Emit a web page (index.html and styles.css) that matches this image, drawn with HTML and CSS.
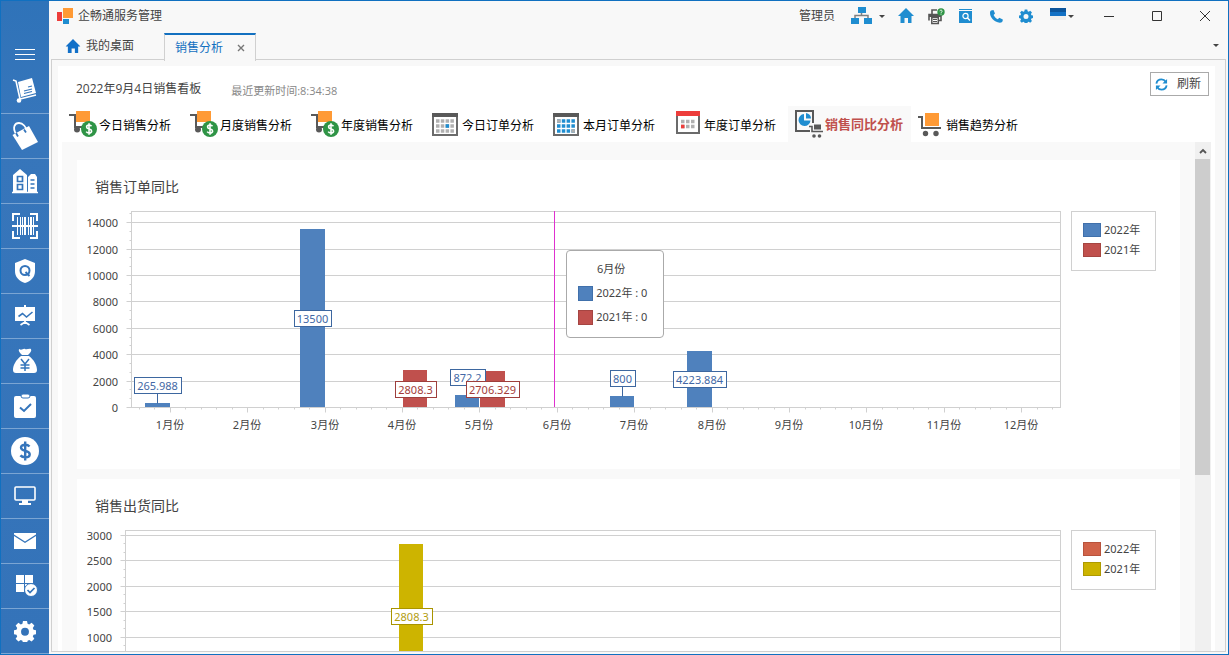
FILE: index.html
```
<!DOCTYPE html>
<html lang="zh-CN">
<head>
<meta charset="utf-8">
<title>企畅通服务管理</title>
<link rel="stylesheet" href="styles.css">
</head>
<body>
<svg class="defs" aria-hidden="true">
  <symbol id="cart-money" viewBox="0 0 28 28">
    <path d="M0 5h6v12h9" fill="none" stroke="#595959" stroke-width="2"/>
    <rect x="7" y="1" width="14" height="11" fill="#ff9a35"/>
    <circle cx="8" cy="19.500" r="3" fill="#595959"/>
    <circle cx="20" cy="19" r="8" fill="#2f9446"/>
    <path d="M22.500 16.200c-.6-.9-1.500-1.200-2.500-1.200-1.400 0-2.400.7-2.400 1.900 0 2.700 5 1.300 5 4 0 1.300-1.100 2-2.600 2-1.200 0-2.200-.4-2.800-1.300M20 13.300v11.400" fill="none" stroke="#fff" stroke-width="1.600"/>
  </symbol>
  <symbol id="gear" viewBox="0 0 24 24">
    <path fill-rule="evenodd" d="M9.800 1h4.400l.6 3 1.800.8 2.600-1.700 3 3-1.700 2.600.8 1.800 2.900.6v4.400l-2.900.6-.8 1.800 1.700 2.600-3 3-2.600-1.700-1.800.8-.6 2.900H9.800l-.6-2.900-1.800-.8-2.600 1.700-3-3 1.700-2.600-.8-1.800-2.900-.6v-4.400l2.900-.6.8-1.800L1.800 6.100l3-3 2.600 1.700L9.200 4zM12 8.500a4.300 4.300 0 1 0 0 8.600 4.300 4.300 0 0 0 0-8.600z"/>
  </symbol>
  <symbol id="home" viewBox="0 0 16 16">
    <path d="M8 0l8 8h-2.500v7H10v-5H6.500v5h-4V8H0z"/>
  </symbol>
</svg>
<div class="window">
  <nav class="sidebar" aria-label="功能模块">
    <button class="menu" aria-label="菜单"><span></span><span></span><span></span></button>
    <button class="module" aria-label="采购"><svg viewBox="0 0 28 28"><path d="M2 3l3 1 4 18 16-4" fill="none" stroke="#fff" stroke-width="1.600"/><path d="M7 5l14-4 4 15-15 4z" fill="#fff"/><circle cx="8" cy="23.500" r="2.300" fill="#fff"/><path d="M13 14l8-2M13 16.500l8-2M17 10l4-1" stroke="#3575bb" stroke-width="1.200"/></svg></button>
    <button class="module" aria-label="销售"><svg viewBox="0 0 28 28"><path d="M1.500 13L18 4l9 16-16 8z" fill="#fff"/><path d="M5 12C1 5 4 1 8 1s7 4 8 8" fill="none" stroke="#fff" stroke-width="1.800"/><path d="M5 11l2 3.500M13 7.500l2 3" stroke="#3575bb" stroke-width="1.800"/></svg></button>
    <button class="module" aria-label="仓库"><svg viewBox="0 0 28 28"><path d="M2 25V8l7-6 7 6v17zM17 25V10l3-3h4l2 3v15z" fill="#fff"/><path d="M1 25.500h26" stroke="#fff" stroke-width="1.500"/><path d="M6.500 9.500h5v5h-5zM6.500 17.500h5v5h-5zM19.500 13h4M19.500 17h4M19.500 21h4" fill="none" stroke="#3575bb" stroke-width="1.700"/></svg></button>
    <button class="module" aria-label="条码"><svg viewBox="0 0 28 28"><path d="M2 9V2h7M19 2h7v7M26 19v7h-7M9 26H2v-7" fill="none" stroke="#fff" stroke-width="2"/><path d="M6.500 5v18M9.500 5v18M11.500 5v18M17.500 5v18M22.500 5v18" stroke="#fff" stroke-width="1"/><path d="M14 5v18M20 5v18" stroke="#fff" stroke-width="2"/><path d="M1 14h26" stroke="#fff" stroke-width="2"/></svg></button>
    <button class="module" aria-label="质量"><svg viewBox="0 0 28 28"><path d="M14 2l10 4v8c0 6-4 10-10 12C8 24 4 20 4 14V6z" fill="#fff"/><circle cx="14" cy="13.500" r="4.500" fill="none" stroke="#3575bb" stroke-width="2"/><path d="M14.500 15l4 4" stroke="#3575bb" stroke-width="2"/></svg></button>
    <button class="module" aria-label="报表"><svg viewBox="0 0 28 28"><path d="M4 5h20v14H4zM13 3h2v2h-2z" fill="#fff"/><path d="M14 19v3M9.500 23l4.500-3 4.500 3" stroke="#fff" stroke-width="1.800" fill="none"/><path d="M7.500 14.500l4-3 4 3.500 6-5" fill="none" stroke="#3575bb" stroke-width="1.600"/></svg></button>
    <button class="module" aria-label="财务"><svg viewBox="0 0 28 28"><path d="M8 2c3 2 4-1 6 0s4-1 6 0c1 2-1 4-3 6h-6C9 6 7 4 8 2zM10 9h8c5 4 8 9 8 14 0 2-1 3-3 3H5c-2 0-3-1-3-3 0-5 3-10 8-14z" fill="#fff"/><path d="M10 12l4 5 4-5M14 17v7M9.500 18h9M9.500 21h9" fill="none" stroke="#3575bb" stroke-width="1.500"/></svg></button>
    <button class="module" aria-label="审批"><svg viewBox="0 0 28 28"><rect x="3" y="4" width="22" height="22" rx="2" fill="#fff"/><rect x="10" y="2" width="9" height="4" rx="2" fill="#fff" stroke="#3575bb"/><path d="M9 15.500l4 3.500 7-7" fill="none" stroke="#3575bb" stroke-width="2"/></svg></button>
    <button class="module" aria-label="资金"><svg viewBox="0 0 28 28"><circle cx="14" cy="14" r="14" fill="#fff"/><path d="M18.500 9.500c-1-1.200-2.600-1.800-4.400-1.800-2.400 0-4.100 1.100-4.100 2.900 0 4.400 8.700 2.200 8.700 6.600 0 2-1.800 3.100-4.300 3.100-2.100 0-3.900-.6-5-1.900M14.200 4.500v19" fill="none" stroke="#3575bb" stroke-width="2.400"/></svg></button>
    <button class="module" aria-label="终端"><svg viewBox="0 0 28 28"><rect x="4" y="5" width="20" height="13" rx="1" fill="none" stroke="#fff" stroke-width="1.600"/><path d="M11 18h6v3h-6zM8 21h12v2H8z" fill="#fff"/></svg></button>
    <button class="module" aria-label="消息"><svg viewBox="0 0 28 28"><path d="M3 6h22v1.500l-11 7-11-7z" fill="#fff"/><path d="M3 9l11 7 11-7v13H3z" fill="#fff"/></svg></button>
    <button class="module" aria-label="应用"><svg viewBox="0 0 28 28"><path d="M5 3h8v8H5zM14 3h8v8h-8zM5 12h8v8H5zM14 12h8v8h-8z" fill="#fff"/><circle cx="20" cy="18" r="6.500" fill="#fff" stroke="#3575bb"/><path d="M16.500 18l2.500 2.500 4.500-4.500" fill="none" stroke="#3575bb" stroke-width="1.700"/></svg></button>
    <button class="module" aria-label="设置"><svg class="module-gear" viewBox="0 0 24 24"><use href="#gear"/></svg></button>
  </nav>

  <div class="workspace">
    <header class="titlebar">
      <svg class="logo" viewBox="0 0 16 16"><path d="M6 0h10v10H6z" fill="#ff9a35"/><path d="M0 4h5v9H0z" fill="#ed3d3b"/><path d="M6 11h6v5H6z" fill="#1f8dd0"/></svg>
      <h1 class="app-title">企畅通服务管理</h1>
      <span class="user">管理员</span>
      <button class="tool split" aria-label="组织"><svg width="22" height="18" viewBox="0 0 22 18"><path d="M4 12V8.500h13V12M10.500 5v4" fill="none" stroke="#808080" stroke-width="1.500"/><path d="M7 0h8v6H7zM0 11h8v6H0zM13 11h8v6h-8z" fill="#1f8dd0"/></svg><i class="caret"></i></button>
      <button class="tool" aria-label="主页"><svg class="blue" width="16" height="16" viewBox="0 0 16 16"><use href="#home"/></svg></button>
      <button class="tool" aria-label="打印"><svg width="17" height="17" viewBox="0 0 17 17"><path d="M4 6V2h5M1 12.500V6.500h12v6h-2" fill="none" stroke="#555" stroke-width="1.600"/><path d="M1 6h12v3H1z" fill="#555"/><path d="M3.800 9.500h6.500v6H3.800z" fill="#fff" stroke="#555" stroke-width="1.500"/><path d="M5 11.500h4M5 13.500h4" stroke="#555"/><circle cx="13" cy="4" r="3.700" fill="#2f9446"/><path d="M11.800 3.200c.2-1.500 2.500-1.300 2.400 0 0 .8-1.200.9-1.200 1.700M13 5.600v1" fill="none" stroke="#fff" stroke-width=".9"/></svg></button>
      <button class="tool" aria-label="查询"><svg width="14" height="15" viewBox="0 0 14 15"><path d="M0 0h13v1H0zM0 2h13v12H0z" fill="#1f8dd0"/><circle cx="6.500" cy="7" r="2.600" fill="none" stroke="#fff" stroke-width="1.200"/><path d="M8.500 9l2.500 2.500" stroke="#fff" stroke-width="1.400"/></svg></button>
      <button class="tool" aria-label="电话"><svg class="blue" width="13" height="13" viewBox="0 0 13 13"><path d="M1 .5L3.500 0l1.500 3.500L3.600 5c.9 2 2.200 3.300 4.200 4.300l1.500-1.500L12.800 9.500c.2 2-1 3.300-3 3.300C4 12 0 7.500 0 3 0 2 .3 1 1 .5z"/></svg></button>
      <button class="tool" aria-label="设置"><svg class="blue" width="14" height="14" viewBox="0 0 24 24"><use href="#gear"/></svg></button>
      <button class="tool split skin" aria-label="主题"><svg width="16" height="18" viewBox="0 0 16 18"><path d="M0 1h16v4H0z" fill="#0b549b"/><path d="M0 5h16v4H0z" fill="#1270c4"/><path d="M0 9h16v4H0z" fill="#efefef"/></svg><i class="caret"></i></button>
      <button class="win" aria-label="最小化"><svg viewBox="0 0 12 12"><path d="M1 6.500h10"/></svg></button>
      <button class="win" aria-label="最大化"><svg viewBox="0 0 12 12"><path d="M1.500 1.500h9v9h-9z"/></svg></button>
      <button class="win" aria-label="关闭"><svg viewBox="0 0 12 12"><path d="M1 1l10 10M11 1L1 11"/></svg></button>
    </header>

    <div class="tabs">
      <button class="tab"><svg class="tab-home" viewBox="0 0 16 16"><use href="#home"/></svg>我的桌面</button>
      <button class="tab current">销售分析<svg class="tab-close" viewBox="0 0 8 8"><path d="M1 1l6 6M7 1L1 7"/></svg></button>
      <i class="caret tab-list"></i>
    </div>

    <main class="frame">
      <div class="panel">
        <div class="heading">
          <h2 class="board-title">2022年9月4日销售看板</h2>
          <span class="updated">最近更新时间:8:34:38</span>
          <button class="refresh"><svg viewBox="0 0 14 14"><path d="M1.500 6C2 3 4.500 1.500 7 1.500c2 0 3.500.8 4.500 2.500M12.500 8c-.5 3-3 4.500-5.500 4.500-2 0-3.500-.8-4.500-2.500" fill="none" stroke="#1f8dd0" stroke-width="2"/><path d="M13 1v5H8zM1 13V8h5z" fill="#1f8dd0"/></svg>刷新</button>
        </div>
        <nav class="reports" aria-label="报表分析">
          <button class="report"><svg viewBox="0 0 28 28"><use href="#cart-money"/></svg><span>今日销售分析</span></button>
          <button class="report"><svg viewBox="0 0 28 28"><use href="#cart-money"/></svg><span>月度销售分析</span></button>
          <button class="report"><svg viewBox="0 0 28 28"><use href="#cart-money"/></svg><span>年度销售分析</span></button>
          <button class="report"><svg viewBox="0 0 28 28"><path d="M1 4h24v21H1z" fill="#fff" stroke="#6b6b6b" stroke-width="2"/><path d="M0 3h26v4H0z" fill="#595959"/><path d="M4 11h18M4 16h18M4 21h18" stroke="#b0b0b0" stroke-width="3.500" stroke-dasharray="3.500 1.300"/><path d="M13.600 14.200h3.500v3.600h-3.500z" fill="#1f8dd0"/></svg><span>今日订单分析</span></button>
          <button class="report"><svg viewBox="0 0 28 28"><path d="M1 4h24v21H1z" fill="#fff" stroke="#6b6b6b" stroke-width="2"/><path d="M0 3h26v4H0z" fill="#595959"/><path d="M4 11h18M4 16h18M4 21h18" stroke="#1f8dd0" stroke-width="3.500" stroke-dasharray="3.500 1.300"/><path d="M4 9.200h3.500v3.600H4zM18.400 19.200h3.500v3.600h-3.500z" fill="#b0b0b0"/></svg><span>本月订单分析</span></button>
          <button class="report"><svg viewBox="0 0 28 28"><path d="M3 2h22v21H3z" fill="#fff" stroke="#6b6b6b" stroke-width="2"/><path d="M2 1h24v5H2z" fill="#ed3d3b"/><path d="M7 11.500h14M7 16.500h14" stroke="#b0b0b0" stroke-width="3.500" stroke-dasharray="3.500 1.500"/><path d="M7 14.700h3.500v3.600H7z" fill="#ed3d3b"/></svg><span>年度订单分析</span></button>
          <button class="report selected"><svg viewBox="0 0 28 28"><path d="M18 13V1H1v20h14" fill="none" stroke="#595959" stroke-width="2"/><path d="M9 4a6 6 0 1 0 6.500 6.500H9z" fill="#1f8dd0"/><path d="M11 3v5.500h5C16 5.500 14 3.500 11 3z" fill="#1f8dd0"/><path d="M14 16.500h3v5h11" fill="none" stroke="#595959" stroke-width="1.600"/><path d="M19 14.500h7v5h-7z" fill="#595959"/><circle cx="19" cy="26" r="1.800" fill="#595959"/><circle cx="24.500" cy="26" r="1.800" fill="#595959"/></svg><span>销售同比分析</span></button>
          <button class="report"><svg class="narrow" viewBox="0 0 26 28"><path d="M0 7h4v11h19" fill="none" stroke="#595959" stroke-width="2"/><path d="M7 3h14v13H7z" fill="#ff9a35"/><circle cx="7.500" cy="23.500" r="2.700" fill="#595959"/><circle cx="18" cy="23.500" r="2.700" fill="#595959"/></svg><span>销售趋势分析</span></button>
        </nav>
        <div class="scroller">
          <div class="cards">
            <section class="card">
              <h3 class="card-title">销售订单同比</h3>
              <div class="card-body">
                <div class="chart" id="orders">
                  <div class="hover-layer">
                    <div class="crosshair"></div>
                    <div class="tip">
                      <div class="tip-title">6月份</div>
                      <div class="tip-row"><i class="tip-swatch blue-fill"></i>2022年 : 0</div>
                      <div class="tip-row"><i class="tip-swatch red-fill"></i>2021年 : 0</div>
                    </div>
                  </div>
                </div>
                <ul class="legend">
                  <li><i class="swatch blue-fill"></i>2022年</li>
                  <li><i class="swatch red-fill"></i>2021年</li>
                </ul>
              </div>
            </section>
            <section class="card">
              <h3 class="card-title">销售出货同比</h3>
              <div class="card-body">
                <div class="chart" id="shipments"></div>
                <ul class="legend">
                  <li><i class="swatch coral-fill"></i>2022年</li>
                  <li><i class="swatch gold-fill"></i>2021年</li>
                </ul>
              </div>
            </section>
          </div>
          <div class="scrollbar">
            <button class="scroll-up" aria-label="向上滚动"><svg viewBox="0 0 8 6"><path d="M1 5l3-3 3 3"/></svg></button>
            <div class="thumb"></div>
          </div>
        </div>
      </div>
    </main>
  </div>
</div>
<script src="charts.js"></script>
</body>
</html>
```

FILE: styles.css
```
* { box-sizing: border-box; }
html, body { height: 100%; }
body {
  margin: 0;
  overflow: hidden;
  font: 12px/18px "Open Sans", "Noto Sans CJK SC", sans-serif;
  color: #444;
}
button {
  border: 0;
  margin: 0;
  padding: 0;
  background: none;
  font: inherit;
  color: inherit;
}
h1, h2, h3, ul { margin: 0; padding: 0; font-weight: 400; }
.defs { display: none; }
.blue { fill: #1f8dd0; }

.window {
  display: flex;
  height: 100vh;
  border: 1px solid #1070c0;
  background: #f8f8f8;
}

/* Sidebar */
.sidebar {
  flex: none;
  display: flex;
  flex-direction: column;
  width: 48px;
  overflow: hidden;
  background: linear-gradient(#2f73b9, #3776bb 20%, #3473b9);
}
.menu {
  flex: none;
  display: flex;
  flex-direction: column;
  align-items: center;
  gap: 4px;
  height: 68px;
  padding-top: 48px;
}
.menu span { width: 20px; height: 1px; background: #fff; }
.module {
  flex: none;
  display: flex;
  align-items: center;
  justify-content: center;
  height: 45px;
  border-bottom: 1px solid #7ba5d3;
}
.module svg { width: 28px; height: 28px; }
.module .module-gear { width: 22px; height: 22px; fill: #fff; }

/* Title bar */
.workspace { flex: 1; min-width: 0; display: flex; flex-direction: column; }
.titlebar { flex: none; display: flex; align-items: center; height: 30px; padding-left: 8px; }
.logo { width: 16px; height: 16px; margin-right: 5px; }
.app-title { font-size: 12px; line-height: 18px; }
.user { margin-left: auto; margin-right: 10px; }
.tool {
  display: flex;
  align-items: center;
  justify-content: center;
  width: 30px;
  height: 28px;
}
.split { width: 46px; gap: 6px; }
.skin { width: 44px; padding-right: 3px; }
.skin { gap: 2px; }
.caret {
  border: 3px solid transparent;
  border-top-color: #444;
  border-bottom: 0;
}
.win { width: 48px; height: 28px; }
.win:last-child { width: 47px; }
.win svg {
  display: block;
  width: 12px;
  height: 12px;
  margin: 0 auto;
  fill: none;
  stroke: #333;
}

/* Document tabs */
.tabs { flex: none; display: flex; align-items: center; height: 28px; padding-left: 3px; }
.tab {
  display: flex;
  align-items: center;
  align-self: stretch;
  width: 112px;
  padding: 2px 0 0 13px;
  font-size: 12px;
}
.tab-home { width: 16px; height: 15px; margin-right: 5px; fill: #1270c8; }
.current {
  position: relative;
  width: 92px;
  height: 28px;
  margin-top: 2px;
  padding: 0 10px;
  justify-content: space-between;
  border: 1px solid #d0d0d0;
  border-top: 2px solid #1270c0;
  border-bottom: 0;
  background: #f8f8f8;
  color: #1270c0;
}
.tab-close { width: 8px; height: 8px; stroke: #777; stroke-width: 1.400; }
.tab-list { margin-left: auto; margin-right: 9px; }

/* Page */
.frame {
  flex: 1;
  min-height: 0;
  margin: 0 2px 2px;
  padding: 6px 10px 0 6px;
  border: 1px solid #d0d0d0;
}
.panel { display: flex; flex-direction: column; height: 100%; background: #fff; }
.heading { flex: none; display: flex; align-items: center; height: 40px; padding: 0 6px 0 18px; }
.board-title { font-size: 12px; line-height: 18px; padding-top: 6px; }
.updated { margin-left: 30px; padding-top: 10px; font-size: 11px; color: #888; }
.refresh {
  display: flex;
  align-items: center;
  align-self: flex-start;
  gap: 9px;
  width: 59px;
  height: 24px;
  margin: 6px 0 0 auto;
  padding-left: 4px;
  border: 1px solid #aaa;
}
.refresh svg { width: 13px; height: 13px; }
.reports { flex: none; display: flex; height: 36px; padding-left: 4px; }
.report {
  display: flex;
  align-items: center;
  padding: 0 12px 0 7px;
  color: #000;
  white-space: nowrap;
}
.report span { padding-top: 3px; }
.report svg { width: 28px; height: 28px; margin-right: 2px; }
.report .narrow { width: 26px; }
.selected {
  padding-right: 8px;
  background: #f9f9f9;
  color: #c0504d;
  font-size: 13px;
  font-weight: 700;
}
.selected span { padding-top: 0; }

.scroller { flex: 1; min-height: 0; display: flex; overflow: hidden; padding: 0 4px; }
.cards {
  flex: 1;
  min-width: 0;
  display: flex;
  flex-direction: column;
  gap: 10px;
  padding: 18px 15px 0;
  overflow-y: auto;
  scrollbar-width: none;
  background: #f9f9f9;
}
.card { flex: none; background: #fff; }
.card-title { padding: 16px 18px 5px; font-size: 14px; line-height: 22px; }
.card-body { display: flex; align-items: flex-start; gap: 10px; padding-right: 24px; }
.chart { position: relative; flex: 1; min-width: 0; height: 266px; font-size: 11px; }
.chart svg { display: block; width: 100%; height: 266px; }
.line { stroke: #d0d0d0; fill: none; }
.chart text { fill: #444; font-family: "Noto Sans", "Noto Sans CJK SC", sans-serif; font-size: 11px; }
.fill-blue { fill: #4f81bd; }
.fill-red { fill: #c0504d; }
.fill-gold { fill: #cdb400; }
.box { fill: #fff; }
.stroke-blue { stroke: #3d67a0; }
.stroke-red { stroke: #9e3f3d; }
.stroke-gold { stroke: #a99400; }
.chart .text-blue { fill: #4368a5; }
.chart .text-red { fill: #a33c3a; }
.chart .text-gold { fill: #b39d10; }

.legend {
  flex: none;
  display: flex;
  flex-direction: column;
  gap: 4px;
  width: 85px;
  margin-top: 8px;
  padding: 10px 0 12px 11px;
  border: 1px solid #d0d0d0;
  list-style: none;
  font: 11px/16px "Noto Sans", "Noto Sans CJK SC", sans-serif;
}
.legend li { display: flex; align-items: center; gap: 3px; height: 16px; }
.swatch { width: 18px; height: 14px; border: 1px solid; }
.tip-swatch { width: 15px; height: 15px; border: 1px solid; }
.blue-fill { background: #4f81bd; border-color: #4070ab; }
.red-fill { background: #c0504d; border-color: #a54542; }
.coral-fill { background: #d16349; border-color: #b8533c; }
.gold-fill { background: #ccb400; border-color: #ae9a00; }

/* Hover details lie over the plot area */
.hover-layer { position: absolute; left: 54px; right: 0; top: 8px; height: 196px; }
.crosshair {
  position: absolute;
  left: 45.500%;
  width: 1px;
  height: 100%;
  background: #df30cf;
}
.tip {
  position: absolute;
  left: 46.800%;
  top: 39px;
  width: 98px;
  padding: 6px 11px 8px;
  border: 1px solid #aaa;
  border-radius: 4px;
  background: #fff;
  font: 11px/24px "Noto Sans", "Noto Sans CJK SC", sans-serif;
}
.tip-title { padding-right: 8px; text-align: center; }
.tip-row { display: flex; align-items: center; gap: 3px; height: 24px; white-space: nowrap; }

.scrollbar { flex: none; width: 16px; background: #f0f0f0; }
.scroll-up { display: block; width: 15px; height: 17px; }
.scroll-up svg { display: block; width: 8px; height: 6px; margin: 0 auto; fill: none; stroke: #555; stroke-width: 1.800; }
.thumb { width: 15px; height: 62%; background: #cdcdcd; }
```

FILE: charts.js
```
const SVG = "http://www.w3.org/2000/svg";
const TOP = 8;

function add(parent, tag, attrs, text) {
  const node = document.createElementNS(SVG, tag);
  for (const key in attrs) node.setAttribute(key, attrs[key]);
  if (text !== undefined) node.textContent = text;
  parent.appendChild(node);
  return node;
}

function line(svg, x1, y1, x2, y2, cls) {
  add(svg, "path", { d: `M${x1 + 0.5} ${y1 + 0.5}L${x2 + 0.5} ${y2 + 0.5}`, class: cls || "line" });
}

function draw(host, chart) {
  const old = host.querySelector(":scope > svg");
  if (old) old.remove();
  const svg = document.createElementNS(SVG, "svg");
  host.prepend(svg);

  const left = chart.left;
  const width = host.clientWidth - left - 1;
  const bottom = TOP + chart.height;
  const y = v => Math.round(bottom - v / chart.max * chart.height);
  const step = width / 12;

  for (let i = 0; i * chart.step / 3 <= chart.max; i++) {
    const v = i * chart.step / 3;
    if (i % 3 === 0) {
      line(svg, left - 5, y(v), left + width, y(v));
      add(svg, "text", { x: left - 13, y: y(v) + 5, "text-anchor": "end" }, Math.round(v));
    } else {
      line(svg, left - 2, y(v), left, y(v));
    }
  }
  add(svg, "rect", { x: left + 0.5, y: TOP + 0.5, width, height: chart.height, class: "line" });

  // Five minor ticks per month, offset so that every fifth meets a month mark
  for (let i = 1; i <= 60; i++) {
    const x = Math.round(left + step * (i / 5 - 0.1));
    line(svg, x, bottom, x, bottom + 2);
  }
  for (let m = 1; m <= 12; m++) {
    const x = Math.round(left + step * (m - 0.5));
    line(svg, x, bottom, x, bottom + 5);
    add(svg, "text", { x, y: bottom + 22, "text-anchor": "middle" }, m + "月份");
  }

  const bars = chart.bars.map(b => {
    const c = left + step * (b.month - 0.5);
    const w = step * 0.318;
    const from = b.side < 0 ? c - w : c + 0.8;
    const x0 = Math.round(from), x1 = Math.round(from + w), top = y(b.value);
    add(svg, "rect", { x: x0, y: top, width: x1 - x0, height: bottom - top, class: "fill-" + b.color });
    return { ...b, mid: Math.floor((x0 + x1) / 2), top };
  });

  for (const b of bars) {
    const outside = bottom - b.top < 17;
    const boxTop = outside ? b.top - 26 : Math.round((b.top + bottom) / 2) - 8;
    if (outside) line(svg, b.mid, boxTop + 16, b.mid, b.top, "stroke-" + b.color);
    const box = add(svg, "rect", { class: "box stroke-" + b.color });
    const label = add(svg, "text", { x: b.mid + 0.5, y: boxTop + 13, "text-anchor": "middle", class: "text-" + b.color }, b.value);
    const w = Math.round((label.getComputedTextLength() + 7) / 2) * 2 - 1;
    box.setAttribute("x", b.mid - (w - 1) / 2 + 0.5);
    box.setAttribute("y", boxTop + 0.5);
    box.setAttribute("width", w);
    box.setAttribute("height", 16);
  }
}

const charts = {
  orders: {
    left: 54, height: 196, max: 14850, step: 2000,
    bars: [
      { month: 1, value: 265.988, side: -1, color: "blue" },
      { month: 3, value: 13500, side: -1, color: "blue" },
      { month: 5, value: 872.2, side: -1, color: "blue" },
      { month: 7, value: 800, side: -1, color: "blue" },
      { month: 8, value: 4223.884, side: -1, color: "blue" },
      { month: 4, value: 2808.3, side: 1, color: "red" },
      { month: 5, value: 2706.329, side: 1, color: "red" }
    ]
  },
  shipments: {
    left: 48, height: 158, max: 3089, step: 500,
    bars: [{ month: 4, value: 2808.3, side: 1, color: "gold" }]
  }
};

function drawAll() {
  for (const id in charts) draw(document.getElementById(id), charts[id]);
}
drawAll();
addEventListener("resize", drawAll);
```
